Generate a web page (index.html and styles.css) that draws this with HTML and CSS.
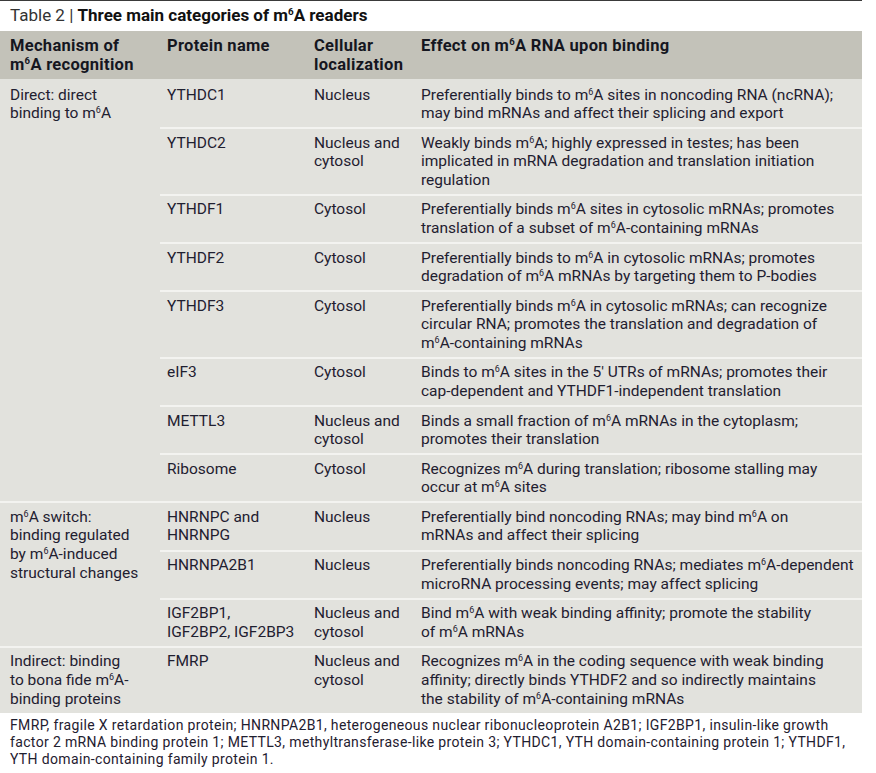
FILE: index.html
```html
<!DOCTYPE html>
<html lang="en">
<head>
<meta charset="utf-8">
<title>Table 2</title>
<link rel="stylesheet" href="styles.css">
</head>
<body>
<div class="page">
  <div class="caption"><span class="label">Table 2</span> <span class="bar">|</span> <b>Three main categories of m<sup>6</sup>A readers</b></div>
  <table class="readers">
    <colgroup>
      <col class="c1"><col class="c2"><col class="c3"><col class="c4">
    </colgroup>
    <thead>
      <tr>
        <th>Mechanism of<br>m<sup>6</sup>A recognition</th>
        <th>Protein name</th>
        <th>Cellular<br>localization</th>
        <th>Effect on m<sup>6</sup>A RNA upon binding</th>
      </tr>
    </thead>
    <tbody>
      <tr class="group">
        <td rowspan="8" class="mech">Direct: direct<br>binding to m<sup>6</sup>A</td>
        <td>YTHDC1</td><td>Nucleus</td>
        <td>Preferentially binds to m<sup>6</sup>A sites in noncoding RNA (ncRNA);<br>may bind mRNAs and affect their splicing and export</td>
      </tr>
      <tr>
        <td>YTHDC2</td><td>Nucleus and<br>cytosol</td>
        <td>Weakly binds m<sup>6</sup>A; highly expressed in testes; has been<br>implicated in mRNA degradation and translation initiation<br>regulation</td>
      </tr>
      <tr>
        <td>YTHDF1</td><td>Cytosol</td>
        <td>Preferentially binds m<sup>6</sup>A sites in cytosolic mRNAs; promotes<br>translation of a subset of m<sup>6</sup>A-containing mRNAs</td>
      </tr>
      <tr>
        <td>YTHDF2</td><td>Cytosol</td>
        <td>Preferentially binds to m<sup>6</sup>A in cytosolic mRNAs; promotes<br>degradation of m<sup>6</sup>A mRNAs by targeting them to P-bodies</td>
      </tr>
      <tr>
        <td>YTHDF3</td><td>Cytosol</td>
        <td>Preferentially binds m<sup>6</sup>A in cytosolic mRNAs; can recognize<br>circular RNA; promotes the translation and degradation of<br>m<sup>6</sup>A-containing mRNAs</td>
      </tr>
      <tr>
        <td>eIF3</td><td>Cytosol</td>
        <td>Binds to m<sup>6</sup>A sites in the 5′ UTRs of mRNAs; promotes their<br>cap-dependent and YTHDF1-independent translation</td>
      </tr>
      <tr>
        <td>METTL3</td><td>Nucleus and<br>cytosol</td>
        <td>Binds a small fraction of m<sup>6</sup>A mRNAs in the cytoplasm;<br>promotes their translation</td>
      </tr>
      <tr>
        <td>Ribosome</td><td>Cytosol</td>
        <td>Recognizes m<sup>6</sup>A during translation; ribosome stalling may<br>occur at m<sup>6</sup>A sites</td>
      </tr>
      <tr class="group">
        <td rowspan="3" class="mech">m<sup>6</sup>A switch:<br>binding regulated<br>by m<sup>6</sup>A-induced<br>structural changes</td>
        <td>HNRNPC and<br>HNRNPG</td><td>Nucleus</td>
        <td>Preferentially bind noncoding RNAs; may bind m<sup>6</sup>A on<br>mRNAs and affect their splicing</td>
      </tr>
      <tr>
        <td>HNRNPA2B1</td><td>Nucleus</td>
        <td>Preferentially binds noncoding RNAs; mediates m<sup>6</sup>A-dependent<br>microRNA processing events; may affect splicing</td>
      </tr>
      <tr>
        <td>IGF2BP1,<br>IGF2BP2, IGF2BP3</td><td>Nucleus and<br>cytosol</td>
        <td>Bind m<sup>6</sup>A with weak binding affinity; promote the stability<br>of m<sup>6</sup>A mRNAs</td>
      </tr>
      <tr class="group">
        <td class="mech">Indirect: binding<br>to bona fide m<sup>6</sup>A-<br>binding proteins</td>
        <td>FMRP</td><td>Nucleus and<br>cytosol</td>
        <td>Recognizes m<sup>6</sup>A in the coding sequence with weak binding<br>affinity; directly binds YTHDF2 and so indirectly maintains<br>the stability of m<sup>6</sup>A-containing mRNAs</td>
      </tr>
    </tbody>
  </table>
  <p class="note">FMRP, fragile X retardation protein; HNRNPA2B1, heterogeneous nuclear ribonucleoprotein A2B1; IGF2BP1, insulin-like growth<br>factor 2 mRNA binding protein 1; METTL3, methyltransferase-like protein 3; YTHDC1, YTH domain-containing protein 1; YTHDF1,<br>YTH domain-containing family protein 1.</p>
</div>
</body>
</html>
```

FILE: styles.css
```css
html, body {
  margin: 0;
  padding: 0;
  background: #ffffff;
}

.page {
  width: 862px;
  font-family: Roboto, "Open Sans", sans-serif;
  color: #1f2030;
}

sup {
  font-size: 0.58em;
  line-height: 0;
  vertical-align: 0.6em;
}

.caption {
  border-top: 1.5px solid #3a3a3a;
  height: 29.5px;
  padding-left: 10px;
  font-size: 17px;
  line-height: 28px;
  white-space: nowrap;
}

.caption .label,
.caption .bar {
  font-weight: 400;
  color: #333;
}

.caption b {
  font-weight: 700;
  color: #111;
}

.readers {
  width: 862px;
  border-collapse: collapse;
  table-layout: fixed;
  font-size: 15.5px;
}

.c1 { width: 160px; }
.c2 { width: 147px; }
.c3 { width: 107px; }
.c4 { width: 448px; }

.readers thead th {
  background: #c3c2b9;
  text-align: left;
  vertical-align: top;
  font-size: 16.5px;
  font-weight: 700;
  letter-spacing: 0.3px;
  line-height: 19.5px;
  padding: 5px 0 4px 7px;
  color: #15161f;
  white-space: nowrap;
}

.readers thead th:first-child {
  padding-left: 10px;
}

.readers tbody td {
  background: #e2e2dd;
  vertical-align: top;
  line-height: 18.58px;
  padding: 4.5px 0 4.5px 7px;
  border-top: 2px solid #f3f3f0;
  white-space: nowrap;
}

.readers tbody td.mech {
  padding-left: 10px;
}

.readers tbody tr:first-child td {
  border-top: 0;
  padding-top: 7px;
}

.note {
  margin: 0;
  padding: 4px 0 0 10px;
  font-size: 14px;
  letter-spacing: 0.35px;
  line-height: 17px;
  color: #1f2030;
  white-space: nowrap;
}
```
